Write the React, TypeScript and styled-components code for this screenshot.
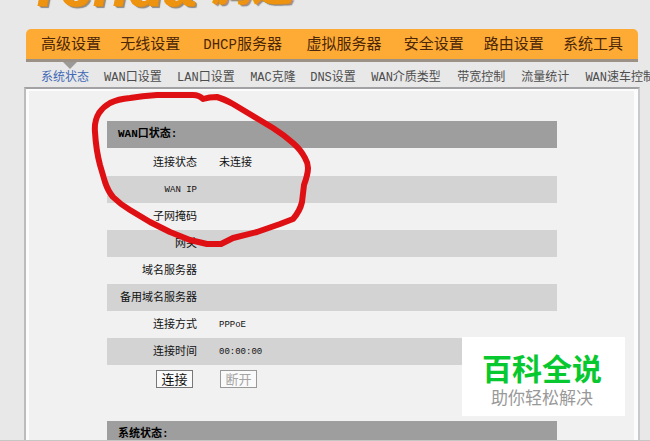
import React from "react";
import styled, { createGlobalStyle, css } from "styled-components";

const GlobalStyle = createGlobalStyle`
  * { box-sizing: border-box; }
  html, body, #root { height: 100%; }
  body {
    margin: 0;
    overflow: hidden;
    background: #e8e8e8;
    color: #111;
    font: 11px "Liberation Mono", "Noto Sans CJK SC", monospace;
  }
`;

const Page = styled.div`
  position: relative;
  display: flex;
  flex-direction: column;
  height: 100%;
  overflow: hidden;
  border-bottom: 1px solid #c6c6c6;
`;

const Brand = styled.header`
  display: flex;
  flex: none;
  align-items: flex-end;
  gap: 16px;
  height: 29px;
  padding: 0 0 23px 27px;
  overflow: hidden;
  color: #ee930f;
  font: italic 900 58px/40px "Liberation Sans", sans-serif;
  text-shadow: 1px 0 0 #ee930f, 2px 1px 0 #c78a35, 3px 2px 1px #85898f;
  white-space: nowrap;
`;

const BrandChinese = styled.span`
  font: italic 700 40px/44px "Noto Sans CJK SC", sans-serif;
`;

const MainNav = styled.nav`
  display: grid;
  flex: none;
  grid-template-columns: 79fr 83fr 103fr 97fr 80fr 79fr auto;
  align-items: center;
  height: 33px;
  margin: 0 12px 0 26px;
  padding: 0 15px;
  border-bottom: 3px solid #9c9186;
  border-radius: 5px 5px 0 0;
  background: #fdab35;
`;

const MainLink = styled.a<{ $active?: boolean }>`
  position: relative;
  color: #4c2608;
  font-size: 15px;
  line-height: 32px;
  text-decoration: none;
  white-space: nowrap;
  ${({ $active }) =>
    $active &&
    css`
      &::after {
        content: "";
        position: absolute;
        top: 100%;
        left: 22px;
        border: 7px solid transparent;
        border-top-color: #9c9a96;
        border-bottom: 0;
      }
    `}
`;

const Latin = styled.span<{ $size: number }>`
  font-size: ${({ $size }) => $size}px;
`;

const SubNav = styled.nav`
  display: grid;
  flex: none;
  grid-template-columns: 63fr 73fr 73fr 60fr 61fr 86fr 64fr 64fr auto;
  height: 25px;
  margin: 0 -5px 0 41px;
`;

const SubLink = styled.a<{ $active?: boolean }>`
  color: ${({ $active }) => ($active ? "#4169b5" : "#4d4d4d")};
  font-size: 12px;
  line-height: 32px;
  text-decoration: none;
  white-space: nowrap;
`;

const Panel = styled.main`
  flex: 1;
  min-height: 0;
  margin: 0 10px 0 24px;
  padding: 32px 81px 0;
  overflow: hidden;
  border: 2px solid #a2a2a4;
  border-right-color: #c9cacd;
  border-left-color: #bcbcbc;
  border-bottom: 0;
  background: #f1f1f1;
  box-shadow: inset 3px 2px 0 #fcfcfc, inset -4px 0 0 #fcfcfc;
`;

const Section = styled.section`
  margin-bottom: 29px;
`;

const Heading = styled.h2`
  margin: 0 0 1px;
  padding-left: 11px;
  background: #9e9e9e;
  color: #000;
  font-size: 11px;
  font-weight: 700;
  line-height: 27px;
`;

const StatusTable = styled.table`
  width: 100%;
  border-collapse: collapse;
  table-layout: fixed;
`;

const Row = styled.tr`
  height: 27px;
  &:nth-child(even) {
    background: #d3d3d3;
  }
`;

const Label = styled.th`
  width: 90px;
  padding: 0;
  font-weight: 400;
  line-height: 20px;
  text-align: right;
  white-space: nowrap;
`;

const Value = styled.td`
  padding: 0 0 0 22px;
  line-height: 20px;
`;

const Actions = styled.div`
  display: flex;
  gap: 27px;
  padding: 5px 0 4px 49px;
`;

const ActionButton = styled.button`
  width: 37px;
  height: 18px;
  padding: 0;
  border: 1px solid #777;
  background: #fafafa;
  color: #111;
  font: 13px/14px "Noto Sans CJK SC", sans-serif;
  &:disabled {
    border-color: #999;
    color: #a5a5a5;
  }
`;

const Scribble = styled.svg`
  position: absolute;
  top: 85px;
  left: 80px;
  width: 240px;
  height: 175px;
  pointer-events: none;
`;

const Watermark = styled.aside`
  position: absolute;
  right: 25px;
  bottom: 24px;
  padding: 12px 23px 8px 20px;
  background: #fff;
  font-family: "Noto Sans CJK SC", sans-serif;
  text-align: center;
`;

const WatermarkTitle = styled.div`
  color: #08c82f;
  font-size: 30px;
  font-weight: 700;
  line-height: 36px;
`;

const WatermarkText = styled.div`
  color: #999;
  font-size: 17px;
  line-height: 23px;
`;

const subItems = [
  "系统状态", "WAN口设置", "LAN口设置", "MAC克隆", "DNS设置",
  "WAN介质类型", "带宽控制", "流量统计", "WAN速车控制",
];

const statusRows: [React.ReactNode, React.ReactNode][] = [
  ["连接状态", "未连接"],
  [<Latin $size={9}>WAN IP</Latin>, ""],
  ["子网掩码", ""],
  ["网关", ""],
  ["域名服务器", ""],
  ["备用域名服务器", ""],
  ["连接方式", <Latin $size={9}>PPPoE</Latin>],
  ["连接时间", <Latin $size={9}>00:00:00</Latin>],
];

export default function App() {
  return (
    <>
      <GlobalStyle />
      <Page>
        <Brand>
          <span>Tenda</span>
          <BrandChinese>腾达</BrandChinese>
        </Brand>
        <MainNav>
          <MainLink href="#advanced" $active>高级设置</MainLink>
          <MainLink href="#wireless">无线设置</MainLink>
          <MainLink href="#dhcp"><Latin $size={14}>DHCP</Latin>服务器</MainLink>
          <MainLink href="#virtual">虚拟服务器</MainLink>
          <MainLink href="#security">安全设置</MainLink>
          <MainLink href="#routing">路由设置</MainLink>
          <MainLink href="#tools">系统工具</MainLink>
        </MainNav>
        <SubNav>
          {subItems.map((item, i) => (
            <SubLink key={item} href={`#page-${i}`} $active={i === 0}>{item}</SubLink>
          ))}
        </SubNav>
        <Panel>
          <Section>
            <Heading>WAN口状态:</Heading>
            <StatusTable>
              <tbody>
                {statusRows.map(([label, value], i) => (
                  <Row key={i}>
                    <Label scope="row">{label}</Label>
                    <Value>{value}</Value>
                  </Row>
                ))}
              </tbody>
            </StatusTable>
            <Actions>
              <ActionButton type="button">连接</ActionButton>
              <ActionButton type="button" disabled>断开</ActionButton>
            </Actions>
          </Section>
          <Section>
            <Heading>系统状态:</Heading>
          </Section>
        </Panel>
        <Scribble viewBox="80 85 240 175" aria-hidden="true">
          <path
            d="M217 97 Q209 97 203 99 Q199 95 193 95 L157 95 Q142 96 130 98 Q118 99 110 103 Q103 107 99 113 Q94 121 95 132 Q96 150 100 165 L105 182 Q108 191 113 197 Q120 204 130 210 L150 222 L170 232 L190 240 L207 244 L221 244 Q227 241 233 238 L257 232 L280 224 L293 219 Q300 211 302 202 L304 185 Q308 174 308 168 Q308 163 305 158 Q301 150 293 143 Q284 135 273 128 L253 116 L233 104 Q224 99 217 97 Z"
            fill="none"
            stroke="#df1014"
            strokeWidth="6"
            strokeLinejoin="round"
          />
        </Scribble>
        <Watermark>
          <WatermarkTitle>百科全说</WatermarkTitle>
          <WatermarkText>助你轻松解决</WatermarkText>
        </Watermark>
      </Page>
    </>
  );
}
